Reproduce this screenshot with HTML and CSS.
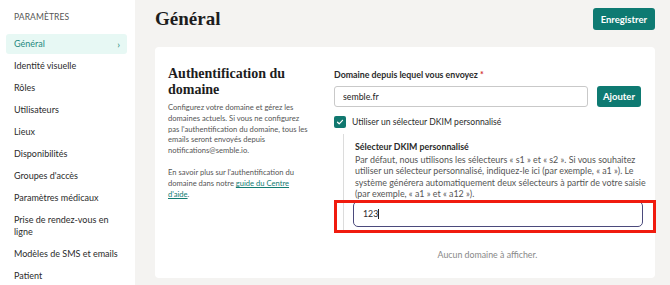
FILE: index.html
```html
<!DOCTYPE html>
<html lang="fr">
<head>
    <meta charset="UTF-8">
    <title>Paramètres - Général</title>
    <link rel="stylesheet" href="styles.css">
</head>
<body>
    <aside class="sidebar">
        <div class="sidebar-title">PARAMÈTRES</div>
        <nav class="menu">
            <a class="menu-item active">Général <span class="chevron">›</span></a>
            <a class="menu-item">Identité visuelle</a>
            <a class="menu-item">Rôles</a>
            <a class="menu-item">Utilisateurs</a>
            <a class="menu-item">Lieux</a>
            <a class="menu-item">Disponibilités</a>
            <a class="menu-item">Groupes d'accès</a>
            <a class="menu-item">Paramètres médicaux</a>
            <a class="menu-item">Prise de rendez-vous en ligne</a>
            <a class="menu-item">Modèles de SMS et emails</a>
            <a class="menu-item">Patient</a>
        </nav>
    </aside>

    <main class="main">
        <header class="page-header">
            <h1>Général</h1>
            <button class="btn">Enregistrer</button>
        </header>

        <section class="card">
            <div class="card-intro">
                <h2>Authentification du domaine</h2>
                <p>Configurez votre domaine et gérez les domaines actuels. Si vous ne configurez pas l'authentification du domaine, tous les emails seront envoyés depuis notifications@semble.io.</p>
                <p class="help">En savoir plus sur l'authentification du domaine dans notre <a href="#">guide du Centre d'aide</a>.</p>
            </div>

            <div class="card-form">
                <label class="field-label">Domaine depuis lequel vous envoyez <span class="req">*</span></label>
                <div class="input-row">
                    <input class="input" type="text" value="semble.fr">
                    <button class="btn btn-small">Ajouter</button>
                </div>

                <label class="check-row">
                    <span class="checkbox">
                        <svg width="8" height="8" viewBox="0 0 8 8"><path d="M1.5 4.2 L3.2 5.8 L6.5 2.3" fill="none" stroke="#fff" stroke-width="1.2" stroke-linecap="round" stroke-linejoin="round"/></svg>
                    </span>
                    Utiliser un sélecteur DKIM personnalisé
                </label>

                <div class="dkim">
                    <div class="dkim-title">Sélecteur DKIM personnalisé</div>
                    <p>Par défaut, nous utilisons les sélecteurs « s1 » et « s2 ». Si vous souhaitez utiliser un sélecteur personnalisé, indiquez-le ici (par exemple, « a1 »). Le système générera automatiquement deux sélecteurs à partir de votre saisie (par exemple, « a1 » et « a12 »).</p>
                    <div class="dkim-input-wrap">
                        <div class="dkim-input">123<span class="caret"></span></div>
                        <div class="highlight"></div>
                    </div>
                </div>

                <div class="empty">Aucun domaine à afficher.</div>
            </div>
        </section>
    </main>
</body>
</html>
```

FILE: styles.css
```css
body {
    margin: 0;
    display: flex;
    min-height: 285px;
    background: #f4f3f1;
    font-family: Lato, "Open Sans", sans-serif;
    color: #2b2b2b;
    overflow: hidden;
}
.sidebar {
    width: 135px;
    flex-shrink: 0;
    background: white;
    padding: 12px 8px 0 6px;
    box-sizing: border-box;
}
.sidebar-title {
    font-size: 8.5px;
    color: #555;
    padding-left: 8px;
    height: 10px;
    letter-spacing: 0.1px;
}
.menu {
    margin-top: 12px;
}
.menu-item {
    display: flex;
    justify-content: space-between;
    align-items: center;
    font-size: 9px;
    color: #2b2b2b;
    padding: 5px 8px;
    line-height: 12px;
    border-radius: 3px;
}
.menu-item.active {
    background: #e7f8f4;
    color: #1f8a80;
    padding: 4px 7px 4px 8px;
    margin-bottom: 1px;
}
.chevron {
    font-size: 10px;
}
.main {
    flex: 1;
    padding: 0 15px 0 20px;
}
.page-header {
    display: flex;
    justify-content: space-between;
    align-items: center;
    height: 38px;
}
h1 {
    margin: 0;
    font-family: "Liberation Serif", serif;
    font-size: 19px;
    font-weight: bold;
    color: #1d1d1d;
}
.btn {
    background: #0e7a72;
    color: white;
    border: none;
    border-radius: 3px;
    font-family: Lato, sans-serif;
    font-weight: bold;
    font-size: 9.5px;
    height: 22px;
    padding: 0 8px;
}
.card {
    margin-top: 9px;
    background: white;
    border-radius: 4px;
    display: flex;
    gap: 24px;
    padding: 19px 14px 14px 13px;
    height: 231px;
    box-sizing: border-box;
}
.card-intro {
    width: 142px;
    flex-shrink: 0;
}
.card-intro h2 {
    font-family: "Liberation Serif", serif;
    font-weight: bold;
    font-size: 14px;
    line-height: 16px;
    margin: 0 0 4px;
    color: #1d1d1d;
}
.card-intro p {
    font-size: 7.6px;
    line-height: 10.8px;
    color: #555;
    margin: 0 0 11px;
}
.card-intro .help {
    line-height: 11.2px;
}
.card-intro a {
    color: #137d73;
}
.card-form {
    flex: 1;
}
.field-label {
    display: block;
    font-size: 8.8px;
    font-weight: bold;
    margin-top: 3px;
    margin-bottom: 6px;
}
.req {
    color: #d23030;
}
.input-row {
    display: flex;
    gap: 9px;
}
.input {
    flex: 1;
    height: 21px;
    box-sizing: border-box;
    border: 1px solid #c9c9c9;
    border-radius: 3px;
    padding: 0 8px;
    font-family: Lato, sans-serif;
    font-size: 8.8px;
    color: #222;
}
.btn-small {
    height: 21px;
    width: 44px;
    padding: 0;
}
.check-row {
    display: flex;
    align-items: center;
    gap: 6px;
    font-size: 8.6px;
    margin-top: 9px;
}
.checkbox {
    width: 12px;
    height: 12px;
    border-radius: 2px;
    background: #11786f;
    display: flex;
    align-items: center;
    justify-content: center;
}
.dkim {
    margin: 6px -12px 0 9px;
    border-left: 1px solid #dcdcdc;
    padding: 7px 0 3px 11px;
}
.dkim-title {
    font-size: 8.8px;
    font-weight: bold;
    margin-bottom: 2px;
}
.dkim p {
    margin: 0 0 1px;
    font-size: 8.9px;
    line-height: 11.4px;
    color: #555;
}
.dkim-input-wrap {
    position: relative;
    margin: 0 10px 0 -2px;
}
.dkim-input {
    height: 26px;
    box-sizing: border-box;
    border: 1.5px solid #4b4a7c;
    border-radius: 5px;
    padding: 0 9px;
    font-size: 8.8px;
    display: flex;
    align-items: center;
}
.caret {
    display: inline-block;
    width: 1px;
    height: 10px;
    background: #222;
}
.highlight {
    position: absolute;
    left: -19px;
    top: -1px;
    right: -13px;
    bottom: -6px;
    border: 3px solid #f01b0e;
}
.empty {
    text-align: center;
    font-size: 8.8px;
    color: #888;
    margin-top: 19px;
}
```
